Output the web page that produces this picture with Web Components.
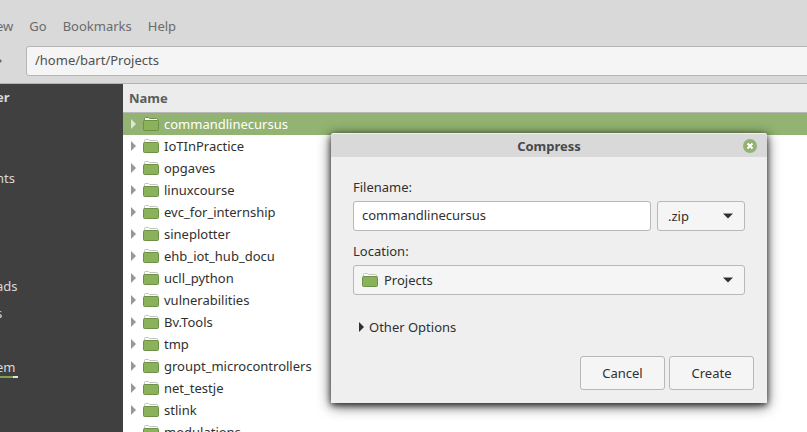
<!DOCTYPE html>
<html lang="en">
<head>
<meta charset="utf-8">
<title>Projects</title>
<style>
html, body { height: 100%; }
body { margin: 0; overflow: hidden; color: #303030; font: 13px/20px "Noto Sans", "Open Sans", sans-serif; }
</style>
</head>
<body>
<file-manager></file-manager>
<script>
const define = (name, html, setup) => {
  const template = document.createElement('template');
  template.innerHTML = html;
  customElements.define(name, class extends HTMLElement {
    constructor() {
      super();
      this.attachShadow({ mode: 'open' }).append(template.content.cloneNode(true));
    }
    connectedCallback() { if (setup) setup(this, this.shadowRoot); }
  });
};

define('folder-icon', `
<style>
:host { display: block; width: 16px; height: 16px; flex: none; }
svg { display: block; }
.tab { stroke: var(--tab-edge, #c3c3c3); }
</style>
<svg width="16" height="16" viewBox="0 0 16 16" aria-hidden="true">
  <path class="tab" d="M1.5 5V2.5Q1.5 1.5 2.5 1.5H5.5L6.5 2.5H13.5Q14.5 2.5 14.5 3.5V5Z" fill="#fff"/>
  <path d="M.5 5.5Q.5 4.5 1.5 4.5H14.5Q15.5 4.5 15.5 5.5V13.5Q15.5 14.5 14.5 14.5H1.5Q.5 14.5 .5 13.5Z" fill="#8ab25b" stroke="#6f9047"/>
</svg>`);

define('menu-bar', `
<style>
:host { display: block; overflow: hidden; }
nav { display: flex; gap: 16px; margin-left: -4px; padding: 16px 0 10px; }
button { all: unset; color: #6b6b6b; cursor: default; }
</style>
<nav aria-label="Menu"><button>ew</button><button>Go</button><button>Bookmarks</button><button>Help</button></nav>`);

define('location-bar', `
<style>
:host { display: flex; align-items: center; padding-bottom: 7px; border-bottom: 1px solid #b3b3b3; overflow: hidden; }
button { all: unset; width: 26px; height: 16px; flex: none; }
svg { display: block; }
input { box-sizing: border-box; flex: 1; min-width: 0; height: 30px; margin: 0 -4px 0 0; padding: 0 8px 2px; border: 1px solid #b5b5b5;
  border-radius: 3px; background: #f5f5f5; color: #505050; font: inherit; outline: 0; }
</style>
<button aria-label="Forward"><svg width="4" height="16" viewBox="0 0 4 16"><path d="M-2 4L2 8L-2 12Z" fill="#6b6b6b"/></svg></button>
<input aria-label="Location" value="/home/bart/Projects">`);

define('side-bar', `
<style>
:host { display: block; overflow: hidden; background: #404040; color: #d9d9d9; }
ul { margin: 0 0 0 -4px; padding: 0; list-style: none; }
li { height: 27px; line-height: 26px; }
.heading { font-weight: 700; }
.usage { display: block; width: 22px; height: 2px; margin-top: -4px; background: linear-gradient(90deg, #7ba151 17px, #e3e3e3 17px); }
a { color: inherit; text-decoration: none; }
</style>
<ul>
  <li class="heading">er</li><li></li><li></li><li><a href="#">nts</a></li><li></li><li></li><li></li>
  <li><a href="#">ads</a></li><li><a href="#">s</a></li><li></li><li><a href="#">em</a><span class="usage"></span></li>
</ul>`);

define('file-list', `
<style>
:host { display: block; overflow: hidden; background: #fff; }
table { width: 100%; border-collapse: separate; border-spacing: 0; }
th { height: 28px; padding: 0 6px; border-bottom: 1px solid #b8b8b8; background: #ececec; color: #5c5c5c; text-align: left; }
td { height: 22px; padding: 0; }
.cell { display: flex; align-items: center; height: 22px; padding-left: 8px; }
button { all: unset; width: 12px; height: 10px; flex: none; color: #979797; }
svg { display: block; }
folder-icon { margin-right: 5px; }
.selected { --tab-edge: #6f9047; }
.selected td { background: #92b372; color: #fff; }
.selected button { color: #dce7d2; }
.leaf button { visibility: hidden; }
</style>
<table><thead><tr><th>Name</th></tr></thead><tbody></tbody></table>`, (host, root) => {
  const names = ['commandlinecursus', 'IoTInPractice', 'opgaves', 'linuxcourse', 'evc_for_internship', 'sineplotter',
    'ehb_iot_hub_docu', 'ucll_python', 'vulnerabilities', 'Bv.Tools', 'tmp', 'groupt_microcontrollers', 'net_testje', 'stlink', 'modulations'];
  const kinds = { commandlinecursus: 'selected', modulations: 'leaf' };
  root.querySelector('tbody').innerHTML = names.map(name => `<tr class="${kinds[name] || ''}"><td><div class="cell">
    <button aria-label="Expand ${name}"><svg width="6" height="10" viewBox="0 0 6 10"><path d="M0 0L5 5L0 10Z" fill="currentColor"/></svg></button>
    <folder-icon></folder-icon>${name}</div></td></tr>`).join('');
});

define('select-box', `
<style>
:host { display: grid; align-items: center; height: 30px; }
select, .icon, svg { grid-area: 1 / 1; }
select { appearance: none; box-sizing: border-box; width: 100%; height: 30px; padding: 0 28px 0 10px; border: 1px solid #b8b8b8;
  border-radius: 3px; background: #f5f5f5; color: inherit; font: inherit; outline: 0; }
:host([icon]) select { padding-left: 30px; }
.icon, svg { z-index: 1; pointer-events: none; }
.icon { margin-left: 9px; }
svg { justify-self: end; margin-right: 12px; }
</style>
<select><option></option></select>
<span class="icon"><slot></slot></span>
<svg width="10" height="6" viewBox="0 0 10 6"><path d="M0 .5H10L5 5.5Z" fill="#303030"/></svg>`, (host, root) => {
  root.querySelector('option').textContent = host.getAttribute('value');
  root.querySelector('select').setAttribute('aria-label', host.getAttribute('label'));
});

define('push-button', `
<style>
:host { display: block; }
button { box-sizing: border-box; width: 85px; height: 34px; padding: 0; border: 1px solid #b8b8b8; border-radius: 3px;
  background: #f5f5f5; color: inherit; font: inherit; }
</style>
<button><slot></slot></button>`);

define('compress-dialog', `
<style>
:host { display: block; border-radius: 3px 3px 0 0; background: #efefef;
  box-shadow: 0 3px 14px rgba(0,0,0,.65), 0 2px 6px rgba(0,0,0,.7); }
header { display: grid; grid-template-columns: 1fr auto 1fr; align-items: center; box-sizing: border-box; height: 24px; padding: 0 10px;
  border-top: 1px solid #f2f2f2; border-radius: 3px 3px 0 0; background: #d9d9d9; color: #484848; }
h1 { grid-column: 2; margin: 0; font: inherit; font-weight: 700; }
.close { all: unset; justify-self: end; width: 14px; height: 14px; }
svg { display: block; }
form { padding: 20px 13px 13px 22px; }
label, .label { display: block; margin-bottom: 4px; }
.fields { padding-right: 9px; }
.row { display: flex; gap: 6px; margin-bottom: 10px; }
input { box-sizing: border-box; flex: 1; min-width: 0; height: 30px; padding: 0 8px 2px; border: 1px solid #b8b8b8; border-radius: 3px;
  background: #fff; color: inherit; font: inherit; outline: 0; }
.type { width: 88px; }
.more { all: unset; display: flex; align-items: center; gap: 4px; margin: 22px 0 19px 6px; }
.actions { display: flex; justify-content: flex-end; gap: 4px; }
</style>
<header><h1>Compress</h1><button class="close" aria-label="Close">
  <svg width="14" height="14" viewBox="0 0 14 14"><circle cx="7" cy="7" r="7" fill="#92b372"/><path d="M4.5 4.5L9.5 9.5M9.5 4.5L4.5 9.5" stroke="#fff" stroke-width="2"/></svg></button></header>
<form>
  <div class="fields">
    <label for="name">Filename:</label>
    <div class="row"><input id="name" value="commandlinecursus"><select-box class="type" label="Archive type" value=".zip"></select-box></div>
    <div class="label">Location:</div>
    <select-box icon label="Location" value="Projects"><folder-icon></folder-icon></select-box>
  </div>
  <button type="button" class="more"><svg width="6" height="10" viewBox="0 0 6 10"><path d="M0 0L5 5L0 10Z" fill="#303030"/></svg>Other Options</button>
  <div class="actions"><push-button>Cancel</push-button><push-button>Create</push-button></div>
</form>`);

define('file-manager', `
<style>
:host { display: flex; flex-direction: column; height: 100vh; background: #d9d9d9; }
main { display: grid; grid-template-columns: 123px 1fr; flex: 1; min-height: 0; }
compress-dialog { position: absolute; left: 331px; right: 40px; top: 133px; }
</style>
<menu-bar></menu-bar>
<location-bar></location-bar>
<main><side-bar></side-bar><file-list></file-list></main>
<compress-dialog role="dialog" aria-label="Compress"></compress-dialog>`);
</script>
</body>
</html>
